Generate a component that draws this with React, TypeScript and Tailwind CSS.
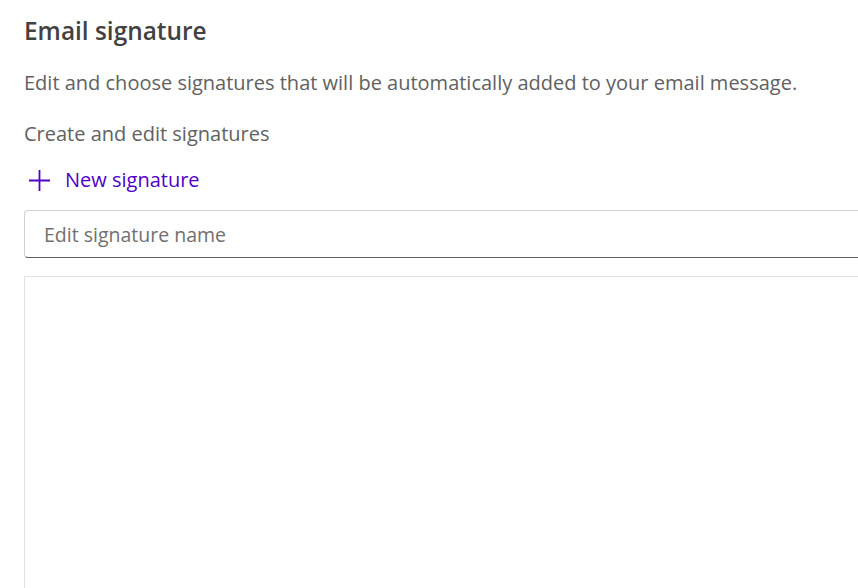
export default function App() {
  return (
    <div className="w-[858px] h-[588px] overflow-hidden bg-white" style={{ fontFamily: '"Open Sans", "Noto Sans", sans-serif' }}>
      <div className="pl-6 w-[900px]">
        <h1 className="pt-[15px] text-[24.4px] leading-[32px] font-semibold text-[#424242]">Email signature</h1>
        <p className="mt-[22px] text-[20px] leading-[28px] text-[#616161]">Edit and choose signatures that will be automatically added to your email message.</p>
        <p className="mt-[23px] text-[20px] leading-[28px] text-[#616161]">Create and edit signatures</p>
        <button className="mt-[18px] flex items-center gap-[14px] text-[#5000c8] text-[20px] leading-[28px]">
          <svg width="23" height="23" viewBox="0 0 23 23" className="ml-[4px]">
            <path d="M11.5 1v21M1 11.5h21" stroke="#5000c8" strokeWidth="1.8" fill="none" />
          </svg>
          <span>New signature</span>
        </button>
        <div className="mt-[16px] h-[48px] rounded-[4px] border border-[#d1d1d1] border-b-[#616161] flex items-center pl-[19px] pt-[2px] text-[19.5px] text-[#707070]">
          Edit signature name
        </div>
        <div className="mt-[18px] h-[400px] border border-[#e0e0e0]"></div>
      </div>
    </div>
  );
}
